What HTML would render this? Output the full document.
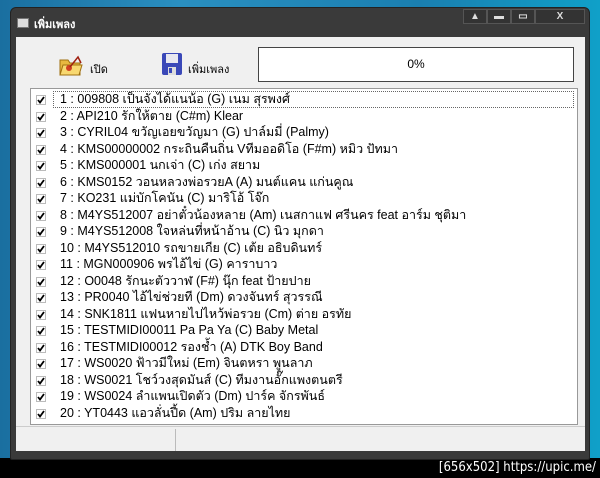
<!DOCTYPE html>
<html><head><meta charset="utf-8"><style>
body{margin:0;width:600px;height:478px;overflow:hidden;background:#000;font-family:"Liberation Sans","Noto Sans CJK SC",sans-serif;position:relative}
.bg{position:absolute;left:0;top:0;width:600px;height:458px;background:linear-gradient(90deg,#1a6fa0,#2a8fc0 30%,#1a7fb0 70%,#10a0c8)}
.win{position:absolute;left:10px;top:7px;width:578px;height:451px;background:#3a3a3a;border-radius:6px 6px 2px 2px;border:1px solid #222}
.title{position:absolute;left:34px;top:15px;color:#fff;font-size:11px;font-weight:bold}
.sysm{position:absolute;left:17px;top:18px;width:10px;height:8px;background:#ddd;border:1px solid #777}
.btns{position:absolute;left:463px;top:9px;height:15px;display:flex}
.btns div{height:13px;border:1px solid #555;background:#333;color:#ddd;font-size:10px;text-align:center;line-height:13px;font-weight:bold}
.client{position:absolute;left:16px;top:37px;width:569px;height:414px;background:#f0f0f0}
.prog{position:absolute;left:258px;top:47px;width:314px;height:33px;background:#fff;border:1px solid #444;font-size:12px;text-align:center;line-height:33px}
.tb{position:absolute;font-size:11px}
.list{position:absolute;left:30px;top:88px;width:546px;height:335px;background:#fff;border:1px solid #999}
.row{position:absolute;left:30px;height:16px;font-size:12.5px;line-height:16px;white-space:nowrap}
.cb{position:absolute;left:6px;width:10px;height:10px}
.sel{position:absolute;left:22px;top:2px;width:519px;height:15px;border:1px dotted #666}
.status{position:absolute;left:16px;top:426px;width:569px;height:24px;border-top:1px solid #ccc}
.foot{position:absolute;right:4px;top:460px;color:#fff;font-family:"DejaVu Sans Condensed","Liberation Sans Narrow",sans-serif;font-size:13px}
</style></head><body>
<div class="bg"></div>
<div class="win"></div>
<div class="sysm"></div><div class="title">เพิ่มเพลง</div>
<div class="btns"><div style="width:22px">▲</div><div style="width:22px">▬</div><div style="width:22px">▭</div><div style="width:48px">X</div></div>
<div class="client"></div>
<svg style="position:absolute;left:58px;top:52px" width="26" height="26"><path d="M2 8h8l2 3h10v12H2z" fill="#e8b840" stroke="#a07010"/><path d="M5 13h19l-3 10H2z" fill="#f8d870" stroke="#a07010"/><circle cx="11" cy="16" r="3" fill="#d04020"/><path d="M12 15l8-10 3 6" stroke="#a02010" fill="none" stroke-width="1.5"/></svg>
<div class="tb" style="left:90px;top:60px">เปิด</div>
<svg style="position:absolute;left:161px;top:52px" width="22" height="24"><rect x="1" y="1" width="20" height="22" rx="2" fill="#3a48b8"/><rect x="5" y="2" width="12" height="9" fill="#e8e8f0"/><rect x="7" y="15" width="8" height="8" fill="#ddd"/><rect x="8" y="16" width="3" height="5" fill="#3a48b8"/></svg>
<div class="tb" style="left:188px;top:60px">เพิ่มเพลง</div>
<div class="prog">0%</div>
<div class="list">
<div class="sel"></div>
<svg width="0" height="0" style="position:absolute"><defs><g id="c"><rect x="0.5" y="0.5" width="9" height="9" fill="#fff" stroke="#bbb"/><path d="M2 5l2 2.5 4-5.5" stroke="#000" stroke-width="1.8" fill="none"/></g></defs></svg>
</div>
<div class="status"><div style="position:absolute;left:159px;top:2px;width:1px;height:22px;background:#bbb"></div></div>
<div class="foot">[656x502] https://upic.me/</div>
<div style="position:absolute;left:30px;top:88px">
<svg class="cb" style="top:7px" viewBox="0 0 10 10"><use href="#c"/></svg><div class="row" style="top:3px">1 : 009808 เป็นจังได้แนน้อ (G) เนม สุรพงศ์</div>
<svg class="cb" style="top:23.5px" viewBox="0 0 10 10"><use href="#c"/></svg><div class="row" style="top:19.5px">2 : API210 รักให้ตาย (C#m) Klear</div>
<svg class="cb" style="top:40px" viewBox="0 0 10 10"><use href="#c"/></svg><div class="row" style="top:36px">3 : CYRIL04 ขวัญเอยขวัญมา (G) ปาล์มมี่ (Palmy)</div>
<svg class="cb" style="top:56.5px" viewBox="0 0 10 10"><use href="#c"/></svg><div class="row" style="top:52.5px">4 : KMS00000002 กระถินคืนถิ่น  Vทีมออดิโอ (F#m) หมิว ปัทมา</div>
<svg class="cb" style="top:73px" viewBox="0 0 10 10"><use href="#c"/></svg><div class="row" style="top:69px">5 : KMS000001 นกเจ่า (C) เก่ง  สยาม</div>
<svg class="cb" style="top:89.5px" viewBox="0 0 10 10"><use href="#c"/></svg><div class="row" style="top:85.5px">6 : KMS0152 วอนหลวงพ่อรวยA (A) มนต์แคน แก่นคูณ</div>
<svg class="cb" style="top:106px" viewBox="0 0 10 10"><use href="#c"/></svg><div class="row" style="top:102px">7 : KO231 แม่บักโคนัน (C) มาริโอ้ โจ๊ก</div>
<svg class="cb" style="top:122.5px" viewBox="0 0 10 10"><use href="#c"/></svg><div class="row" style="top:118.5px">8 : M4YS512007 อย่าตั๋วน้องหลาย (Am) เนสกาแฟ ศรีนคร feat อาร์ม ชุติมา</div>
<svg class="cb" style="top:139px" viewBox="0 0 10 10"><use href="#c"/></svg><div class="row" style="top:135px">9 : M4YS512008 ใจหล่นที่หน้าอ้าน (C) นิว มุกดา</div>
<svg class="cb" style="top:155.5px" viewBox="0 0 10 10"><use href="#c"/></svg><div class="row" style="top:151.5px">10 : M4YS512010 รถขายเกีย (C) เต้ย อธิบดินทร์</div>
<svg class="cb" style="top:172px" viewBox="0 0 10 10"><use href="#c"/></svg><div class="row" style="top:168px">11 : MGN000906 พรไอ้ไข่ (G) คาราบาว</div>
<svg class="cb" style="top:188.5px" viewBox="0 0 10 10"><use href="#c"/></svg><div class="row" style="top:184.5px">12 : O0048 รักนะตัววาฬ (F#) นุ๊ก feat ป้ายปาย</div>
<svg class="cb" style="top:205px" viewBox="0 0 10 10"><use href="#c"/></svg><div class="row" style="top:201px">13 : PR0040 ไอ้ไข่ช่วยที (Dm) ดวงจันทร์ สุวรรณี</div>
<svg class="cb" style="top:221.5px" viewBox="0 0 10 10"><use href="#c"/></svg><div class="row" style="top:217.5px">14 : SNK1811 แฟนหายไปไหว้พ่อรวย (Cm) ต่าย อรทัย</div>
<svg class="cb" style="top:238px" viewBox="0 0 10 10"><use href="#c"/></svg><div class="row" style="top:234px">15 : TESTMIDI00011 Pa Pa Ya (C) Baby Metal</div>
<svg class="cb" style="top:254.5px" viewBox="0 0 10 10"><use href="#c"/></svg><div class="row" style="top:250.5px">16 : TESTMIDI00012 รองช้ำ (A) DTK Boy Band</div>
<svg class="cb" style="top:271px" viewBox="0 0 10 10"><use href="#c"/></svg><div class="row" style="top:267px">17 : WS0020 ฟ้าวมีใหม่ (Em) จินตหรา พูนลาภ</div>
<svg class="cb" style="top:287.5px" viewBox="0 0 10 10"><use href="#c"/></svg><div class="row" style="top:283.5px">18 : WS0021 โชว์วงสุดมันส์ (C) ทีมงานอั๊กแพงตนตรี</div>
<svg class="cb" style="top:304px" viewBox="0 0 10 10"><use href="#c"/></svg><div class="row" style="top:300px">19 : WS0024 ลำแพนเปิดตัว (Dm) ปาร์ค จักรพันธ์</div>
<svg class="cb" style="top:320.5px" viewBox="0 0 10 10"><use href="#c"/></svg><div class="row" style="top:316.5px">20 : YT0443 แอวลั่นปี้ด (Am) ปริม ลายไทย</div>
</div>
</body></html>
